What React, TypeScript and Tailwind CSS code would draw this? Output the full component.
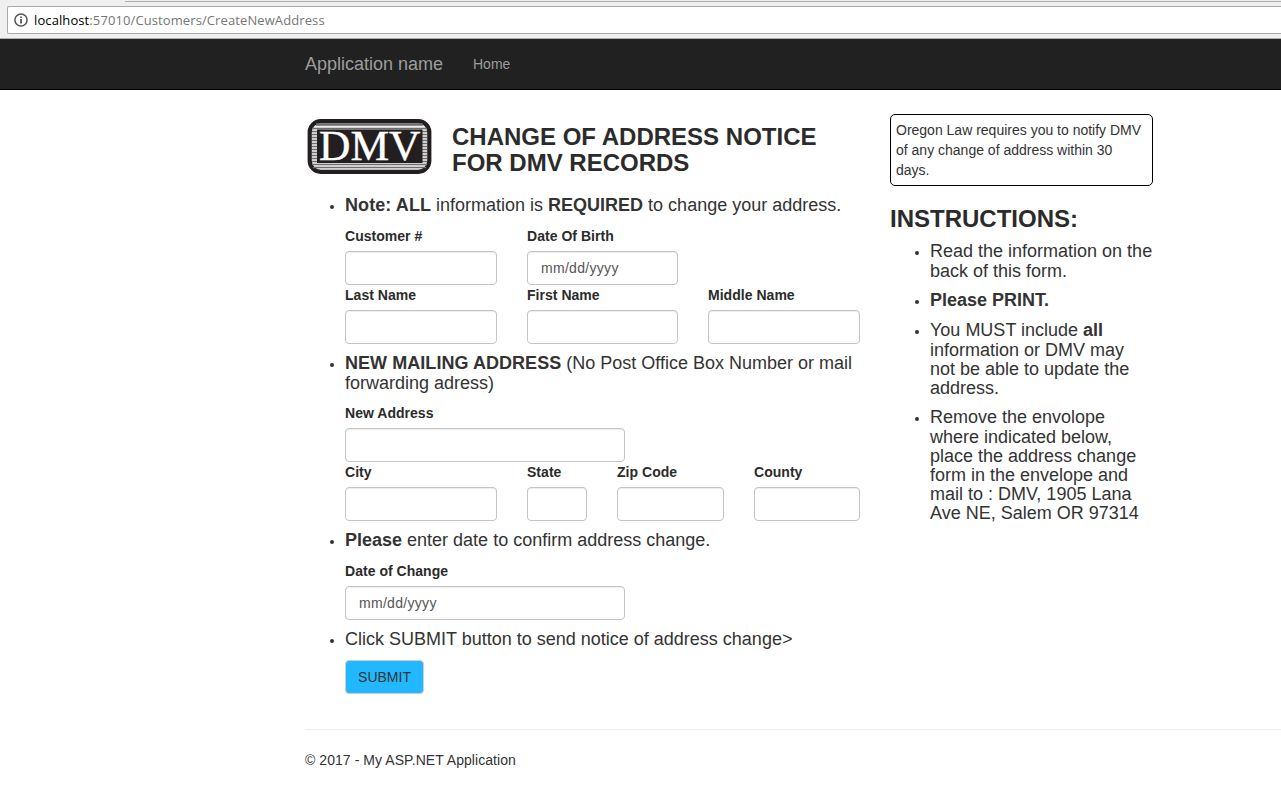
import type { ReactNode } from "react";

function Lines({ lines }: { lines: ReactNode[] }) {
  return (
    <h4 className={lines.length > 1 ? "-mb-px text-[18px] whitespace-nowrap" : "text-[18px] whitespace-nowrap"}>
      {lines.map((line, i) => (
        <span
          key={i}
          className={
            i > 0 ? "block leading-[19px]" : lines.length > 1 ? "mb-px block leading-[20px]" : "block leading-[20px]"
          }
        >
          {line}
        </span>
      ))}
    </h4>
  );
}

function Bullet({ children }: { children: ReactNode }) {
  return (
    <li className="flex">
      <span className="mt-[10px] mr-[11px] ml-[25px] size-[4px] shrink-0 rounded-full bg-[#333]" />
      <div>{children}</div>
    </li>
  );
}

function Field({ label, width, placeholder }: { label: string; width: string; placeholder?: string }) {
  return (
    <label className={`block shrink-0 ${width}`}>
      <span className="mb-[5px] block text-[14px] leading-[20px] font-bold tracking-[0.03px] whitespace-nowrap text-[#2b2b2b]">
        {label}
      </span>
      <input
        type="text"
        placeholder={placeholder}
        className="block h-[34px] w-full rounded-[4px] border border-[#c4c4c4] bg-white px-[13px] text-[14px] tracking-[0.3px] shadow-[inset_0_1px_1px_rgba(0,0,0,0.075)] outline-none placeholder:text-[#555]"
      />
    </label>
  );
}

function Logo() {
  return (
    <svg width="128" height="60" viewBox="305 116 128 60" className="block shrink-0">
      <rect x="309.7" y="121.2" width="119.6" height="50.6" rx="11" fill="#f0f0f0" stroke="#231f20" strokeWidth="4.2" />
      <path d="M316 124.5h107" stroke="#6e6e6e" strokeWidth="2.4" />
      <path
        d="M312 128.5h115M312 131.5h115M312 134.5h115M312 137.5h115M312 140.5h115M312 143.5h115M312 146.5h115M312 149.5h115M312 152.5h115M312 155.5h115M312 158.5h115M312 161.5h115M312 164.5h115M313 167.5h113"
        stroke="#6e6e6e"
        strokeWidth="1.3"
      />
      <rect x="317" y="129.5" width="105.5" height="33.5" fill="#231f20" />
      <text
        x="319"
        y="160"
        fontFamily="Liberation Serif, serif"
        fontSize="42"
        textLength="101.5"
        lengthAdjust="spacingAndGlyphs"
        fill="#fff"
        stroke="#fff"
        strokeWidth="0.4"
      >
        DMV
      </text>
    </svg>
  );
}

export default function App() {
  return (
    <div className="h-[799px] w-full overflow-hidden bg-white font-['Liberation_Sans',Arial,sans-serif] text-[14px] leading-[20px] text-[#333]">
      <div className="flex h-[39px] flex-col border-b border-[#b0b0b0] bg-[#f0f0f0]">
        <div className="mt-px ml-[125px] h-px shrink-0 bg-[#b0b0b0]" />
        <div className="mt-[4px] ml-[7px] flex h-[28px] shrink-0 items-center rounded-l-[2px] border border-r-0 border-[#a9a9a9] bg-white pl-[6px]">
          <svg width="14" height="14" viewBox="0 0 14 14" fill="none" stroke="#555" strokeWidth="1.5">
            <circle cx="7" cy="7" r="6.1" />
            <path d="M7 6v4.4M7 3.4v1.5" strokeWidth="1.8" />
          </svg>
          <span className="ml-[6px] font-['Open_Sans',sans-serif] text-[13px] leading-[20px] tracking-[0.1px] whitespace-nowrap text-[#767676]">
            <span className="text-black">localhost</span>:57010/Customers/CreateNewAddress
          </span>
        </div>
      </div>

      <nav className="flex h-[51px] items-center border-b border-black bg-[#212121] pl-[305px] text-[#9d9d9d]">
        <span className="w-[168px] text-[18px] leading-[20px] whitespace-nowrap">Application name</span>
        <span className="text-[14px]">Home</span>
      </nav>

      <div className="flex h-[639px] pt-[24px] pl-[305px]">
        <main className="w-[585px] shrink-0">
          <div className="mt-[2px] flex h-[79px]">
            <Logo />
            <h1 className="mt-[8px] ml-[19px] text-[24px] leading-[26px] font-bold whitespace-nowrap text-[#2b2b2b]">
              CHANGE OF ADDRESS NOTICE
              <br />
              FOR DMV RECORDS
            </h1>
          </div>
          <ul>
            <Bullet>
              <Lines
                lines={[
                  <>
                    <b className="tracking-[0.08px]">Note: ALL</b> information is <b>REQUIRED</b> to change your address.
                  </>,
                ]}
              />
              <div className="mt-[11px] flex gap-[30px]">
                <Field label="Customer #" width="w-[152px]" />
                <Field label="Date Of Birth" width="w-[151px]" placeholder="mm/dd/yyyy" />
              </div>
              <div className="mb-[9px] flex gap-[30px]">
                <Field label="Last Name" width="w-[152px]" />
                <Field label="First Name" width="w-[151px]" />
                <Field label="Middle Name" width="w-[152px]" />
              </div>
            </Bullet>
            <Bullet>
              <Lines
                lines={[
                  <>
                    <b className="tracking-[0.05px]">NEW MAILING ADDRESS</b> (No Post Office Box Number or mail
                  </>,
                  "forwarding adress)",
                ]}
              />
              <div className="mt-[11px]">
                <Field label="New Address" width="w-[280px]" />
              </div>
              <div className="mb-[9px] flex gap-[30px]">
                <Field label="City" width="w-[152px]" />
                <Field label="State" width="w-[60px]" />
                <Field label="Zip Code" width="w-[107px]" />
                <Field label="County" width="w-[106px]" />
              </div>
            </Bullet>
            <Bullet>
              <Lines
                lines={[
                  <>
                    <b>Please</b> enter date to confirm address change.
                  </>,
                ]}
              />
              <div className="mt-[11px] mb-[9px]">
                <Field label="Date of Change" width="w-[280px]" placeholder="mm/dd/yyyy" />
              </div>
            </Bullet>
            <Bullet>
              <Lines lines={["Click SUBMIT button to send notice of address change>"]} />
              <button className="mt-[11px] block h-[34px] w-[79px] rounded-[4px] border border-[#ccc] bg-[#22b8ff] text-[14px] text-[#333]">
                SUBMIT
              </button>
            </Bullet>
          </ul>
        </main>

        <aside className="w-[263px] shrink-0">
          <p className="h-[72px] rounded-[5px] border border-black p-[5px] whitespace-nowrap">
            Oregon Law requires you to notify DMV
            <br />
            of any change of address within 30
            <br />
            days.
          </p>
          <h3 className="mt-[20px] mb-[9px] text-[24px] leading-[26px] font-bold whitespace-nowrap text-[#2b2b2b]">
            INSTRUCTIONS:
          </h3>
          <ul className="flex flex-col gap-[10px]">
            <Bullet>
              <Lines lines={["Read the information on the", "back of this form."]} />
            </Bullet>
            <Bullet>
              <Lines lines={[<b key="print">Please PRINT.</b>]} />
            </Bullet>
            <Bullet>
              <Lines
                lines={[
                  <>
                    You MUST include <b>all</b>
                  </>,
                  "information or DMV may",
                  "not be able to update the",
                  "address.",
                ]}
              />
            </Bullet>
            <Bullet>
              <Lines
                lines={[
                  "Remove the envolope",
                  "where indicated below,",
                  "place the address change",
                  "form in the envelope and",
                  "mail to : DMV, 1905 Lana",
                  "Ave NE, Salem OR 97314",
                ]}
              />
            </Bullet>
          </ul>
        </aside>
      </div>

      <footer className="ml-[305px] border-t border-[#eee] pt-[20px] tracking-[0.06px] whitespace-nowrap">
        © 2017 - My ASP.NET Application
      </footer>
    </div>
  );
}
